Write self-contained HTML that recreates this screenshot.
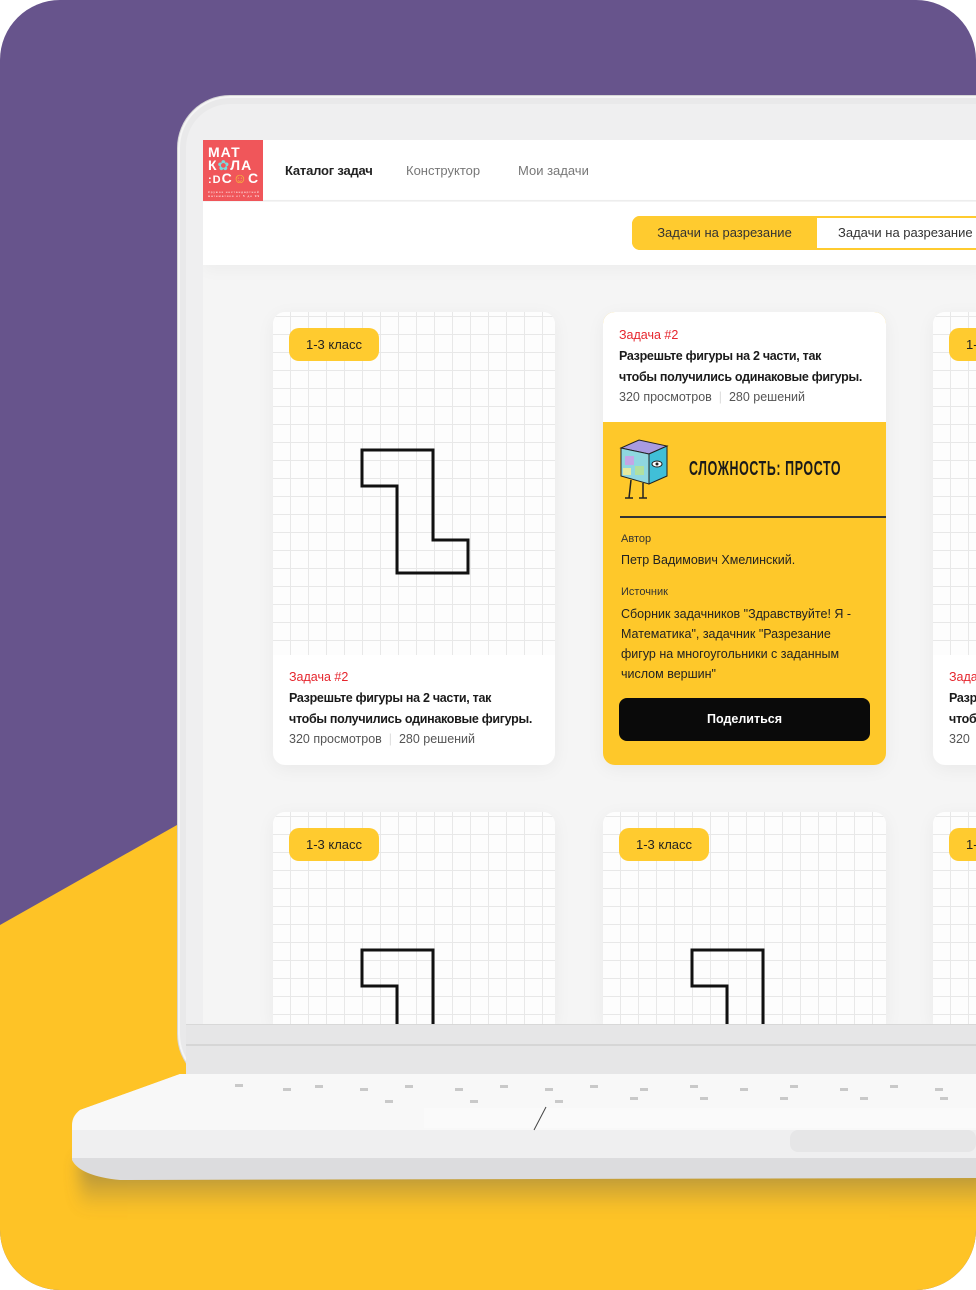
<!DOCTYPE html>
<html><head><meta charset="utf-8"><style>
*{margin:0;padding:0;box-sizing:border-box}
html,body{width:976px;height:1290px;background:#fff;overflow:hidden;font-family:"Liberation Sans","DejaVu Sans",sans-serif}
#root{position:absolute;left:0;top:0;width:976px;height:1290px;border-radius:60px;overflow:hidden;background:#67548c}
.abs{position:absolute}
.grid{background-color:#fdfdfd;background-image:linear-gradient(#e8e8e8 1px,transparent 1px),linear-gradient(90deg,#e8e8e8 1px,transparent 1px);background-size:18px 18px;background-position:-1px 4px}
.card{position:absolute;border-radius:12px;overflow:hidden;background:#fff;box-shadow:0 4px 18px rgba(0,0,0,.05)}
.badge{position:absolute;left:16px;top:16px;width:90px;height:33px;background:#ffcb2f;border-radius:10px;font-size:13px;color:#222;text-align:center;line-height:33px}
.red{color:#e6262e;font-size:12.5px}
.t{font-size:12.5px;font-weight:bold;color:#1a1a1a;line-height:21px;letter-spacing:-.3px;white-space:nowrap}
.m{font-size:12.5px;color:#555}
</style></head><body><div id="root">
<svg class="abs" style="left:0;top:0" width="976" height="1290"><polygon points="0,925 200,812 976,812 976,1290 0,1290" fill="#fec326"/></svg>
<div class="abs" style="left:178px;top:96px;width:860px;height:990px;background:#e9e9ea;border-radius:52px;border:2px solid #f5f5f5;box-shadow:0 0 0 1px #d5d5d5"></div>
<div class="abs" style="left:186px;top:104px;width:850px;height:970px;background:#efeff0;border-radius:44px"></div>
<div class="abs" style="left:203px;top:140px;width:780px;height:884px;background:#f5f5f5;overflow:hidden">
 <div class="abs" style="left:0;top:0;width:780px;height:61px;background:#fff;border-bottom:1px solid #eee"></div>
 <div class="abs" style="left:0;top:0;width:60px;height:61px;background:#f0565a;color:#fff;font-weight:bold;font-size:14px;line-height:13px;padding:6px 0 0 5px;letter-spacing:1px">МАТ<br>К<span style="color:#7dd">✿</span>ЛА<br><span style="font-size:11px">:D</span>С<span style="color:#f5c338">☺</span>С<div style="font-size:3px;line-height:4px;font-weight:normal;margin-top:3px">Кружок нестандартной<br>математики от 5 до 99</div></div>
 <div class="abs" style="left:82px;top:23px;font-size:13px;color:#222;font-weight:bold;letter-spacing:-.2px">Каталог задач</div>
 <div class="abs" style="left:203px;top:23px;font-size:13px;color:#777">Конструктор</div>
 <div class="abs" style="left:315px;top:23px;font-size:13px;color:#777">Мои задачи</div>
 <div class="abs" style="left:0;top:62px;width:780px;height:63px;background:#fff;box-shadow:0 6px 14px rgba(0,0,0,.03)"></div>
 <div class="abs" style="left:429px;top:76px;width:400px;height:34px;border:2px solid #ffcb2f;border-radius:8px;background:#fff"></div>
 <div class="abs" style="left:429px;top:76px;width:185px;height:34px;background:#ffcb2f;border-radius:8px 0 0 8px;font-size:13px;color:#333;text-align:center;line-height:34px">Задачи на разрезание</div>
 <div class="abs" style="left:635px;top:76px;font-size:13px;color:#333;line-height:34px;white-space:nowrap">Задачи на разрезание</div>
</div>
<div class="card" style="left:273px;top:312px;width:282px;height:453px">
 <div class="abs grid" style="left:0;top:0;width:282px;height:343px"></div>
 <svg class="abs" style="left:0;top:0" width="282" height="343"><polygon points="89,138 160,138 160,228 195,228 195,261 124,261 124,174 89,174" fill="none" stroke="#111" stroke-width="3"/></svg>
 <div class="badge">1-3 класс</div>
 <div class="abs" style="left:16px;top:358px"><div class="red">Задача #2</div><div class="t" style="margin-top:4px">Разрешьте фигуры на 2 части, так<br>чтобы получились одинаковые фигуры.</div><div class="m" style="margin-top:2px">320 просмотров <span style="color:#ddd">&nbsp;|&nbsp;</span> 280 решений</div></div>
</div>
<div class="card" style="left:603px;top:312px;width:283px;height:453px;background:#fec82a">
 <div class="abs" style="left:0;top:0;width:283px;height:110px;background:#fff"></div>
 <div class="abs" style="left:16px;top:16px"><div class="red">Задача #2</div><div class="t" style="margin-top:4px">Разрешьте фигуры на 2 части, так<br>чтобы получились одинаковые фигуры.</div><div class="m" style="margin-top:2px">320 просмотров <span style="color:#ddd">&nbsp;|&nbsp;</span> 280 решений</div></div>
 <svg class="abs" style="left:14px;top:124px" width="54" height="66">
  <polygon points="4,12 22,4 50,10 32,18" fill="#a99be0" stroke="#222" stroke-width="1"/>
  <polygon points="4,12 32,18 32,48 4,40" fill="#8fd7e0" stroke="#222" stroke-width="1"/>
  <polygon points="32,18 50,10 50,40 32,48" fill="#40bfd8" stroke="#222" stroke-width="1"/>
  <rect x="8" y="20" width="9" height="9" fill="#c4a6e6"/><rect x="18" y="30" width="9" height="9" fill="#b0e0a0"/><rect x="6" y="32" width="8" height="7" fill="#e4eaa0"/>
  <ellipse cx="40" cy="28" rx="5" ry="3" fill="#fff" stroke="#222"/><circle cx="40" cy="28" r="1.5" fill="#222"/>
  <path d="M14 44 L12 62 M26 47 L26 62 M8 62 L16 62 M22 62 L30 62" stroke="#222" stroke-width="1.5" fill="none"/>
 </svg>
 <div class="abs" style="left:86px;top:146px;font-family:'Liberation Sans Narrow','Liberation Sans',sans-serif;font-size:20px;font-weight:bold;color:#1a1a1a;transform:scaleX(.62);transform-origin:left;white-space:nowrap;letter-spacing:1px">СЛОЖНОСТЬ: ПРОСТО</div>
 <div class="abs" style="left:17px;top:204px;width:266px;height:2px;background:#333"></div>
 <div class="abs" style="left:18px;top:221px;font-size:11px;color:#333">Автор</div>
 <div class="abs" style="left:18px;top:241px;font-size:12.5px;color:#222">Петр Вадимович Хмелинский.</div>
 <div class="abs" style="left:18px;top:274px;font-size:11px;color:#333">Источник</div>
 <div class="abs" style="left:18px;top:292px;width:262px;font-size:12.5px;color:#222;line-height:20px;white-space:nowrap">Сборник задачников "Здравствуйте! Я -<br>Математика", задачник "Разрезание<br>фигур на многоугольники с заданным<br>числом вершин"</div>
 <div class="abs" style="left:16px;top:386px;width:251px;height:43px;background:#0a0a0a;border-radius:8px;color:#fff;font-size:12.5px;font-weight:bold;text-align:center;line-height:43px">Поделиться</div>
</div>
<div class="card" style="left:933px;top:312px;width:60px;height:453px">
 <div class="abs grid" style="left:0;top:0;width:60px;height:343px"></div>
 <div class="badge">1-3 класс</div>
 <div class="abs" style="left:16px;top:358px"><div class="red">Задача</div><div class="t" style="margin-top:4px">Разр<br>чтоб</div><div class="m" style="margin-top:2px">320</div></div>
</div>
<div class="card" style="left:273px;top:812px;width:282px;height:212px;border-radius:12px 12px 0 0"><div class="abs grid" style="left:0;top:0;width:282px;height:212px"></div>
 <svg class="abs" style="left:0;top:0" width="282" height="212"><polyline points="124,212 124,174 89,174 89,138 160,138 160,212" fill="none" stroke="#111" stroke-width="3"/></svg>
 <div class="badge">1-3 класс</div></div>
<div class="card" style="left:603px;top:812px;width:283px;height:212px;border-radius:12px 12px 0 0"><div class="abs grid" style="left:0;top:0;width:283px;height:212px"></div>
 <svg class="abs" style="left:0;top:0" width="283" height="212"><polyline points="124,212 124,174 89,174 89,138 160,138 160,212" fill="none" stroke="#111" stroke-width="3"/></svg>
 <div class="badge">1-3 класс</div></div>
<div class="card" style="left:933px;top:812px;width:60px;height:212px;border-radius:12px 0 0 0"><div class="abs grid" style="left:0;top:0;width:60px;height:212px"></div><div class="badge">1-3 класс</div></div>
<div class="abs" style="left:186px;top:1024px;width:800px;height:52px;background:#e6e6e7;border-top:1px solid #d8d8d8"></div>
<div class="abs" style="left:186px;top:1044px;width:800px;height:2px;background:#d6d6d6"></div>
<div class="abs" style="left:80px;top:1160px;width:910px;height:50px;background:linear-gradient(#8a7a4a,rgba(254,195,38,0));filter:blur(8px);opacity:.8"></div>
<svg class="abs" style="left:0;top:1070px" width="976" height="120">
 <path d="M180 4 L976 4 L976 105 L110 105 Q72 102 72 80 L72 55 Q72 46 80 40 Z" fill="#f4f4f5"/>
 <path d="M72 85 L976 85 L976 108 L120 110 Q80 106 72 90Z" fill="#dcdcde"/>
 <path d="M72 60 Q72 46 80 40 L180 4 L976 4 L976 62 L80 62Z" fill="#f8f8f8"/>
 <rect x="72" y="60" width="904" height="28" fill="#efeff0"/>
 <rect x="424" y="38" width="560" height="20" fill="#fafafa"/>
 <rect x="790" y="60" width="186" height="22" rx="8" fill="#e6e6e7"/>
 <path d="M546 37 L534 60" stroke="#444" stroke-width="1" fill="none"/>
 <g fill="#c9c9c9"><rect x="235" y="14" width="8" height="3"/><rect x="283" y="18" width="8" height="3"/><rect x="315" y="15" width="8" height="3"/><rect x="360" y="18" width="8" height="3"/><rect x="405" y="15" width="8" height="3"/><rect x="455" y="18" width="8" height="3"/><rect x="500" y="15" width="8" height="3"/><rect x="545" y="18" width="8" height="3"/><rect x="590" y="15" width="8" height="3"/><rect x="640" y="18" width="8" height="3"/><rect x="690" y="15" width="8" height="3"/><rect x="740" y="18" width="8" height="3"/><rect x="790" y="15" width="8" height="3"/><rect x="840" y="18" width="8" height="3"/><rect x="890" y="15" width="8" height="3"/><rect x="935" y="18" width="8" height="3"/><rect x="385" y="30" width="8" height="3"/><rect x="470" y="30" width="8" height="3"/><rect x="555" y="30" width="8" height="3"/><rect x="630" y="27" width="8" height="3"/><rect x="700" y="27" width="8" height="3"/><rect x="780" y="27" width="8" height="3"/><rect x="860" y="27" width="8" height="3"/><rect x="940" y="27" width="8" height="3"/></g>
</svg>
</div></body></html>
